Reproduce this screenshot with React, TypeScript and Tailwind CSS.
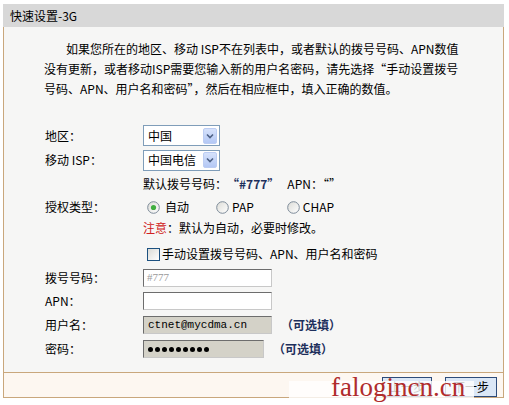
import React from "react";

const font = { fontFamily: '"Noto Sans CJK SC", "Noto Sans", sans-serif' };

function SelectBox({ text }: { text: string }) {
  return (
    <div className="w-[77px] h-[21px] border border-[#7f9db9] bg-white flex items-center justify-between pl-[4px] pr-[2px]">
      <span className="text-[12px] leading-none text-black">{text}</span>
      <div className="w-[14px] h-[16px] rounded-[2px] bg-gradient-to-b from-[#d6e2fb] to-[#b4c8f5] border border-[#bccdf3] flex items-center justify-center">
        <svg width="8" height="6" viewBox="0 0 8 6">
          <path d="M1 1.5 L4 4.5 L7 1.5" fill="none" stroke="#4d6185" strokeWidth="1.6" />
        </svg>
      </div>
    </div>
  );
}

function Radio({ checked }: { checked?: boolean }) {
  return (
    <svg width="13" height="13" viewBox="0 0 13 13">
      <defs>
        <linearGradient id="rg" x1="0" y1="0" x2="1" y2="1">
          <stop offset="0" stopColor="#dcdcd7" />
          <stop offset="1" stopColor="#ffffff" />
        </linearGradient>
      </defs>
      <circle cx="6.5" cy="6.5" r="5.8" fill="url(#rg)" stroke="#7d8b99" strokeWidth="1" />
      {checked && <circle cx="6.5" cy="6.5" r="2.6" fill="#3fae3f" />}
    </svg>
  );
}

function Row({ h, label, children, extra = "" }: { h: string; label?: string; children?: React.ReactNode; extra?: string }) {
  return (
    <div className={`flex items-center ${h} ${extra}`}>
      <div className="w-[99px] pl-[1px] whitespace-nowrap">{label}</div>
      <div className="flex items-center">{children}</div>
    </div>
  );
}

const dots = [0, 1, 2, 3, 4, 5, 6, 7, 8];

export default function App() {
  return (
    <div className="w-[509px] h-[405px] bg-white relative overflow-hidden text-[12px] text-black" style={font}>
      <div className="ml-[3px] mt-[4px] w-[501px]">
        <div className="h-[23px] bg-[#d8d8d8] pl-[7px] flex items-center text-[12px]">快速设置-3G</div>
        <div className="h-[345px] border-x border-[#c9a77c] bg-[#f6f6f5] pl-[40px]">
          <div className="pt-[12px] leading-[20px] whitespace-nowrap">
            <div className="pl-[22px]">如果您所在的地区、移动 ISP不在列表中，或者默认的拨号号码、APN数值</div>
            <div>没有更新，或者移动ISP需要您输入新的用户名密码，请先选择“手动设置拨号</div>
            <div>号码、APN、用户名和密码”，然后在相应框中，填入正确的数值。</div>
          </div>
          <div className="mt-[24px]">
            <Row h="h-[25px]" label="地区：">
              <SelectBox text="中国" />
            </Row>
            <Row h="h-[24px]" label="移动 ISP：">
              <SelectBox text="中国电信" />
            </Row>
            <Row h="h-[23px]">
              <span>默认拨号号码：</span>
              <span className="font-bold text-[#1d2f5c]">“#777”</span>
              <span className="ml-[8px]">APN：“”</span>
            </Row>
            <Row h="h-[24px]" label="授权类型：">
              <div className="flex items-center pl-[4px]">
                <Radio checked />
                <span className="ml-[5px]">自动</span>
              </div>
              <div className="flex items-center ml-[27px]">
                <Radio />
                <span className="ml-[3px]">PAP</span>
              </div>
              <div className="flex items-center ml-[33px]">
                <Radio />
                <span className="ml-[3px]">CHAP</span>
              </div>
            </Row>
            <Row h="h-[17px]">
              <span className="text-[#d02020]">注意</span>
              <span>：默认为自动，必要时修改。</span>
            </Row>
            <Row h="h-[24px]" extra="mt-[6px]">
              <div className="ml-[4px] w-[13px] h-[13px] border border-[#1c5180] bg-gradient-to-br from-[#dcdcd7] to-white" />
              <span className="ml-[2px]">手动设置拨号号码、APN、用户名和密码</span>
            </Row>
            <Row h="h-[23px]" label="拨号号码：">
              <div className="w-[129px] h-[18px] border border-[#6d6d6d] border-b-[#c8c8c8] border-r-[#c8c8c8] bg-white pl-[3px] flex items-center text-[11px] text-[#9a9a9a]" style={{ fontFamily: '"Liberation Serif", serif' }}>
                #777
              </div>
            </Row>
            <Row h="h-[24px]" label="APN：">
              <div className="w-[129px] h-[18px] border border-[#6d6d6d] border-b-[#c8c8c8] border-r-[#c8c8c8] bg-white" />
            </Row>
            <Row h="h-[24px]" label="用户名：">
              <div className="w-[129px] h-[18px] border border-[#6d6d6d] border-b-[#c8c8c8] border-r-[#c8c8c8] bg-[#d4d2c8] pl-[4px] flex items-center text-[11px] text-black" style={{ fontFamily: '"Liberation Mono", monospace' }}>
                ctnet@mycdma.cn
              </div>
              <span className="ml-[9px] font-bold text-[#1d2f5c]">（可选填）</span>
            </Row>
            <Row h="h-[24px]" label="密码：">
              <div className="w-[121px] h-[18px] border border-[#6d6d6d] border-b-[#c8c8c8] border-r-[#c8c8c8] bg-[#d4d2c8] pl-[4px] flex items-center gap-[2px]">
                {dots.map((d) => (
                  <span key={d} className="block w-[5px] h-[5px] rounded-full bg-black" />
                ))}
              </div>
              <span className="ml-[9px] font-bold text-[#1d2f5c]">（可选填）</span>
            </Row>
          </div>
        </div>
        <div className="h-[26px] border border-[#c9a77c] bg-[#fdf7f1] flex items-center justify-end pr-[6px] gap-[13px]">
          <div className="w-[50px] h-[20px] mt-[4px] border border-[#2d4b7a] bg-[#dbe7f6] flex items-center justify-center text-[12px]">上一步</div>
          <div className="w-[52px] h-[20px] mt-[4px] border border-[#2d4b7a] bg-[#dbe7f6] flex items-center justify-center text-[12px]">下一步</div>
        </div>
      </div>
      <div className="absolute left-[289px] top-[381px] w-[185px] h-[24px] bg-white/80" />
      <div
        className="absolute left-[331px] top-[371px] text-[27px] leading-[32px] text-[#b02c2c]"
        style={{ fontFamily: '"Liberation Serif", serif' }}
      >
        falogincn.cn
      </div>
    </div>
  );
}
